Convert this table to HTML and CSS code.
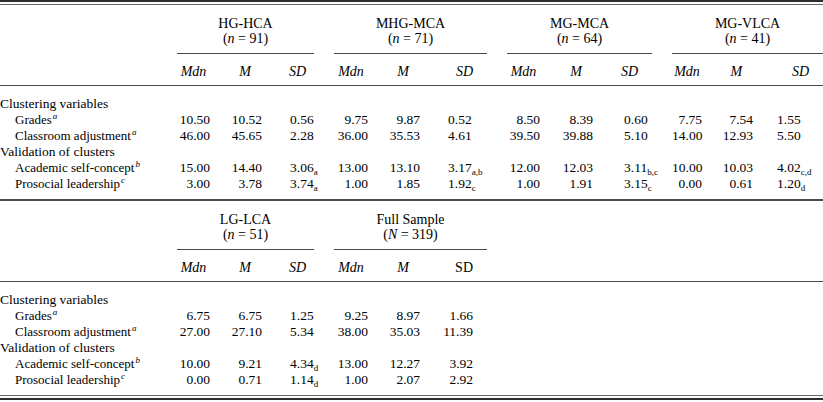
FILE: index.html
```html
<!DOCTYPE html>
<html lang="en">
<head>
<meta charset="utf-8">
<title>Cluster statistics</title>
<link rel="stylesheet" href="styles.css">
</head>
<body>
<div class="page">
  <div class="rule-top"></div>
  <table class="stats">
    <colgroup>
      <col class="c-label">
      <col class="w33"><col class="w52"><col class="w52"><col class="w20">
      <col class="w34"><col class="w52"><col class="w67"><col class="w20">
      <col class="w33"><col class="w53"><col class="w59"><col class="w20">
      <col class="w30"><col class="w51"><col class="w70">
    </colgroup>
    <thead>
      <tr class="spanners">
        <th></th>
        <th colspan="3" class="span">HG-HCA<br>(<i>n</i> = 91)</th><th></th>
        <th colspan="3" class="span">MHG-MCA<br>(<i>n</i> = 71)</th><th></th>
        <th colspan="3" class="span">MG-MCA<br>(<i>n</i> = 64)</th><th></th>
        <th colspan="3" class="span">MG-VLCA<br>(<i>n</i> = 41)</th>
      </tr>
      <tr class="colheads">
        <th></th>
        <th class="h-mdn">Mdn</th><th class="h-m">M</th><th class="h-sd first-sd">SD</th><th></th>
        <th class="h-mdn">Mdn</th><th class="h-m">M</th><th class="h-sd">SD</th><th></th>
        <th class="h-mdn">Mdn</th><th class="h-m">M</th><th class="h-sd">SD</th><th></th>
        <th class="h-mdn">Mdn</th><th class="h-m">M</th><th class="h-sd">SD</th>
      </tr>
    </thead>
    <tbody>
      <tr class="row-first"><td colspan="16" class="section">Clustering variables</td></tr>
      <tr>
        <td class="label">Grades<sup class="fn">a</sup></td>
        <td class="num">10.50</td><td class="num">10.52</td><td class="sd g1">0.56</td><td></td>
        <td class="num">9.75</td><td class="num">9.87</td><td class="sd g2">0.52</td><td></td>
        <td class="num">8.50</td><td class="num">8.39</td><td class="sd g3">0.60</td><td></td>
        <td class="num">7.75</td><td class="num">7.54</td><td class="sd g4">1.55</td>
      </tr>
      <tr>
        <td class="label">Classroom adjustment<sup class="fn">a</sup></td>
        <td class="num">46.00</td><td class="num">45.65</td><td class="sd g1">2.28</td><td></td>
        <td class="num">36.00</td><td class="num">35.53</td><td class="sd g2">4.61</td><td></td>
        <td class="num">39.50</td><td class="num">39.88</td><td class="sd g3">5.10</td><td></td>
        <td class="num">14.00</td><td class="num">12.93</td><td class="sd g4">5.50</td>
      </tr>
      <tr><td colspan="16" class="section">Validation of clusters</td></tr>
      <tr>
        <td class="label">Academic self-concept<sup class="fn">b</sup></td>
        <td class="num">15.00</td><td class="num">14.40</td><td class="sd g1">3.06<sub class="grp">a</sub></td><td></td>
        <td class="num">13.00</td><td class="num">13.10</td><td class="sd g2">3.17<sub class="grp">a,b</sub></td><td></td>
        <td class="num">12.00</td><td class="num">12.03</td><td class="sd g3">3.11<sub class="grp">b,c</sub></td><td></td>
        <td class="num">10.00</td><td class="num">10.03</td><td class="sd g4">4.02<sub class="grp">c,d</sub></td>
      </tr>
      <tr class="row-last">
        <td class="label">Prosocial leadership<sup class="fn">c</sup></td>
        <td class="num">3.00</td><td class="num">3.78</td><td class="sd g1">3.74<sub class="grp">a</sub></td><td></td>
        <td class="num">1.00</td><td class="num">1.85</td><td class="sd g2">1.92<sub class="grp">c</sub></td><td></td>
        <td class="num">1.00</td><td class="num">1.91</td><td class="sd g3">3.15<sub class="grp">c</sub></td><td></td>
        <td class="num">0.00</td><td class="num">0.61</td><td class="sd g4">1.20<sub class="grp">d</sub></td>
      </tr>
    </tbody>
  </table>
  <div class="rule-mid"></div>
  <table class="stats">
    <colgroup>
      <col class="c-label">
      <col class="w33"><col class="w52"><col class="w52"><col class="w20">
      <col class="w34"><col class="w52"><col class="w67"><col class="w20">
      <col class="w33"><col class="w53"><col class="w59"><col class="w20">
      <col class="w30"><col class="w51"><col class="w70">
    </colgroup>
    <thead>
      <tr class="spanners">
        <th></th>
        <th colspan="3" class="span">LG-LCA<br>(<i>n</i> = 51)</th><th></th>
        <th colspan="3" class="span">Full Sample<br>(<i>N</i> = 319)</th><th></th>
        <th colspan="3"></th><th></th>
        <th colspan="3"></th>
      </tr>
      <tr class="colheads">
        <th></th>
        <th class="h-mdn">Mdn</th><th class="h-m">M</th><th class="h-sd first-sd">SD</th><th></th>
        <th class="h-mdn">Mdn</th><th class="h-m">M</th><th class="h-sd roman">SD</th><th></th>
        <th></th><th></th><th></th><th></th>
        <th></th><th></th><th></th>
      </tr>
    </thead>
    <tbody>
      <tr class="row-first"><td colspan="16" class="section">Clustering variables</td></tr>
      <tr>
        <td class="label">Grades<sup class="fn">a</sup></td>
        <td class="num">6.75</td><td class="num">6.75</td><td class="sd g1">1.25</td><td></td>
        <td class="num">9.25</td><td class="num">8.97</td><td class="sd-r">1.66</td><td></td>
        <td colspan="8"></td>
      </tr>
      <tr>
        <td class="label">Classroom adjustment<sup class="fn">a</sup></td>
        <td class="num">27.00</td><td class="num">27.10</td><td class="sd g1">5.34</td><td></td>
        <td class="num">38.00</td><td class="num">35.03</td><td class="sd-r">11.39</td><td></td>
        <td colspan="8"></td>
      </tr>
      <tr><td colspan="16" class="section">Validation of clusters</td></tr>
      <tr>
        <td class="label">Academic self-concept<sup class="fn">b</sup></td>
        <td class="num">10.00</td><td class="num">9.21</td><td class="sd g1">4.34<sub class="grp">d</sub></td><td></td>
        <td class="num">13.00</td><td class="num">12.27</td><td class="sd-r">3.92</td><td></td>
        <td colspan="8"></td>
      </tr>
      <tr class="row-last">
        <td class="label">Prosocial leadership<sup class="fn">c</sup></td>
        <td class="num">0.00</td><td class="num">0.71</td><td class="sd g1">1.14<sub class="grp">d</sub></td><td></td>
        <td class="num">1.00</td><td class="num">2.07</td><td class="sd-r">2.92</td><td></td>
        <td colspan="8"></td>
      </tr>
    </tbody>
  </table>
  <div class="rule-bottom"></div>
</div>
</body>
</html>
```
FILE: styles.css
```css
html, body {
  margin: 0;
  padding: 0;
  background: #ffffff;
}

.page {
  width: 823px;
  font-family: "Liberation Serif", "Times New Roman", serif;
  font-size: 13.5px;
  color: #000000;
}

.rule-top {
  height: 2px;
  border-top: 2px solid #2e2e2e;
  border-bottom: 1px solid #6a6a6a;
}

.rule-mid {
  height: 0;
  border-top: 2px solid #4a4a4a;
}

.rule-bottom {
  height: 2px;
  border-top: 1px solid #6a6a6a;
  border-bottom: 2px solid #2e2e2e;
}

.stats {
  width: 823px;
  border-collapse: collapse;
  table-layout: fixed;
}

.c-label { width: 177px; }
.w20 { width: 20px; }
.w30 { width: 30px; }
.w33 { width: 33px; }
.w34 { width: 34px; }
.w51 { width: 51px; }
.w52 { width: 52px; }
.w53 { width: 53px; }
.w59 { width: 59px; }
.w67 { width: 67px; }
.w70 { width: 70px; }

.stats th,
.stats td {
  padding: 0;
  font-weight: normal;
  white-space: nowrap;
}

.spanners th {
  padding-top: 11px;
  padding-bottom: 7px;
  line-height: 15px;
  font-size: 14px;
  text-align: center;
  vertical-align: top;
}

.spanners th.span {
  border-bottom: 1px solid #4a4a4a;
}

.colheads th {
  padding-top: 10px;
  padding-bottom: 5px;
  line-height: 16px;
  font-size: 14px;
  font-style: italic;
  border-bottom: 1px solid #4a4a4a;
}

.h-mdn { text-align: center; }
.h-m { text-align: right; padding-right: 11px !important; }
.h-sd { text-align: right; padding-right: 14px !important; }
.h-sd.first-sd { padding-right: 8px !important; }
.h-sd.roman { font-style: normal; }

.stats tbody td {
  line-height: 16px;
  height: 16px;
}

.stats tbody .row-first td { padding-top: 10px; }
.stats tbody .row-last td { padding-bottom: 7px; }

.section {
  text-align: left;
  font-size: 13.5px;
}

.label {
  text-align: left;
  font-size: 13px;
  padding-left: 15px !important;
}

.num {
  text-align: right;
}

.sd { text-align: left; }
.sd.g1 { padding-left: 28px !important; }
.sd.g2 { padding-left: 28px !important; }
.sd.g3 { padding-left: 31px !important; }
.sd.g4 { padding-left: 24px !important; }

.sd-r {
  text-align: right;
  padding-right: 14px !important;
}

.fn {
  font-style: italic;
  font-size: 9px;
  line-height: 0;
  vertical-align: 5px;
  margin-left: 1px;
}

.grp {
  font-size: 9px;
  line-height: 0;
  vertical-align: -3px;
}
```
